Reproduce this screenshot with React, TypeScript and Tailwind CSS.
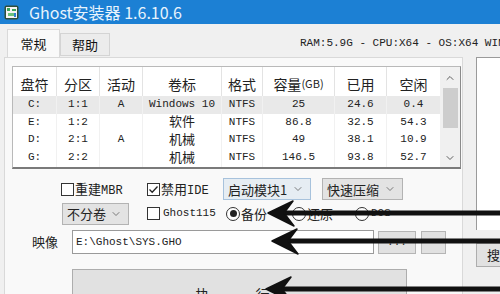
import { ChevronDown, ChevronUp } from 'lucide-react';

const CJK = { fontFamily: '"Noto Sans CJK SC", "Noto Sans", sans-serif' };
const MONO = { fontFamily: '"Liberation Mono", "Noto Sans CJK SC", monospace' };

const COLS = [
    { w: 'w-[44px]', label: '盘符' },
    { w: 'w-[43px]', label: '分区' },
    { w: 'w-[43px]', label: '活动' },
    { w: 'w-[79px]', label: '卷标' },
    { w: 'w-[41px]', label: '格式' },
    { w: 'w-[72px]', label: '容量' },
    { w: 'w-[52px]', label: '已用' },
    { w: 'w-[53px]', label: '空闲' },
];

const ROWS = [
    ['C:', '1:1', 'A', 'Windows 10', 'NTFS', '25', '24.6', '0.4'],
    ['E:', '1:2', '', '软件', 'NTFS', '86.8', '32.5', '54.3'],
    ['D:', '2:1', 'A', '机械', 'NTFS', '49', '38.1', '10.9'],
    ['G:', '2:2', '', '机械', 'NTFS', '146.5', '93.8', '52.7'],
    ['F:', '3:1', '', '文档', 'NTFS', '200', '120.4', '79.6'],
];

const isCjk = (s: string) => /[\u4e00-\u9fff]/.test(s);

function AppIcon() {
    return (
        <svg width="15" height="15" viewBox="0 0 15 15">
            <rect x="0.5" y="0.5" width="14" height="14" rx="2" fill="#2f4f3a" />
            <rect x="2" y="2" width="11" height="11" fill="#f4f4f4" />
            <rect x="3" y="3" width="3" height="3" fill="#3aa55a" />
            <rect x="8" y="4" width="4" height="2" fill="#3aa55a" />
            <rect x="4" y="8" width="6" height="3" fill="#6cc27c" />
            <rect x="10" y="8" width="2" height="4" fill="#2d7fd0" />
        </svg>
    );
}

function Checkbox({ checked }: { checked?: boolean }) {
    return (
        <span className="w-[13px] h-[13px] border border-[#333] bg-white flex items-center justify-center shrink-0">
            {checked && (
                <svg width="11" height="11" viewBox="0 0 11 11">
                    <path d="M1.5 5.5 L4.2 8.2 L9.5 2.5" stroke="#222" strokeWidth="1.3" fill="none" />
                </svg>
            )}
        </span>
    );
}

function Radio({ checked }: { checked?: boolean }) {
    return (
        <span className="w-[14px] h-[14px] rounded-full border border-[#333] bg-white flex items-center justify-center shrink-0">
            {checked && <span className="w-[7px] h-[7px] rounded-full bg-[#222]" />}
        </span>
    );
}

function Select({ label, className }: { label: string; className: string }) {
    return (
        <div className={`h-[22px] shrink-0 flex items-center justify-between pl-[4px] pr-[6px] border text-[13px] leading-none text-[#222] ${className}`} style={CJK}>
            <span>{label}</span>
            <ChevronDown size={12} strokeWidth={1.5} className="text-[#555]" />
        </div>
    );
}

function Arrow({ tip, y }: { tip: number; y: number }) {
    return (
        <g fill="#111" stroke="#111">
            <line x1={tip + 14} y1={y} x2={510} y2={y} strokeWidth="5" />
            <polygon points={`${tip},${y} ${tip + 25},${y - 12} ${tip + 16},${y} ${tip + 26},${y + 13}`} strokeWidth="1.5" strokeLinejoin="round" />
        </g>
    );
}

export default function App() {
    return (
        <div className="relative w-[500px] h-[294px] overflow-hidden bg-[#f0f0f0] flex flex-col" style={CJK}>
            {/* Title bar */}
            <div className="h-[24px] bg-[#1c80d4] flex items-center pl-[4px] shrink-0">
                <AppIcon />
                <span className="ml-[10px] text-[16px] text-[#e8f3fc] leading-none">Ghost安装器 1.6.10.6</span>
            </div>

            {/* Tab header row */}
            <div className="h-[33px] flex items-end shrink-0 relative">
                <div className="ml-[7px] w-[53px] h-[28px] bg-[#f9f9f9] border border-b-0 border-[#d9d9d9] flex items-center justify-center text-[13px] text-[#111]">
                    常规
                </div>
                <div className="w-[50px] h-[23px] mb-[1px] bg-[#ececec] border border-[#d4d4d4] flex items-center justify-center text-[13px] text-[#111]">
                    帮助
                </div>
                <span className="absolute left-[300px] top-[11px] text-[11px] text-[#222] whitespace-nowrap" style={MONO}>
                    RAM:5.9G - CPU:X64 - OS:X64 WIN10
                </span>
            </div>

            <div className="flex flex-1 min-h-0">
                {/* Tab panel */}
                <div className="ml-[4px] w-[459px] shrink-0 bg-[#f9f9f9] border-l border-t border-r border-[#d9d9d9] flex flex-col">
                    {/* Partition list */}
                    <div className="ml-[7px] mt-[8px] w-[449px] h-[103px] shrink-0 bg-white border-t border-l border-[#b9b9b9] border-r border-r-[#8a8a8a] border-b-2 border-b-[#7a7a7a] flex overflow-hidden">
                        <div className="flex flex-col">
                            <div className="flex h-[29px] shrink-0">
                                {COLS.map((c, i) => (
                                    <div key={c.label} className={`${c.w} h-full flex items-center justify-center pt-[4px] text-[14px] leading-none text-[#222] ${i < COLS.length - 1 ? 'border-r border-[#e3e3e3]' : ''}`}>
                                        {c.label}
                                        {i === 5 && <span className="text-[11px]">(GB)</span>}
                                    </div>
                                ))}
                            </div>
                            {ROWS.map((r, ri) => (
                                <div key={ri} className={`flex h-[17.6px] shrink-0 ${ri === 0 ? 'bg-[#e9e9e9]' : ''}`}>
                                    {r.map((v, ci) => (
                                        <div
                                            key={ci}
                                            className={`${COLS[ci].w} h-full flex items-center justify-center leading-none text-[#222] ${isCjk(v) ? 'text-[13px] pb-[3px]' : 'text-[11px]'} ${ci < COLS.length - 1 ? 'border-r border-[#f1f1f1]' : ''}`}
                                            style={isCjk(v) ? CJK : MONO}
                                        >
                                            {v}
                                        </div>
                                    ))}
                                </div>
                            ))}
                        </div>
                        {/* Scrollbar */}
                        <div className="w-[20px] h-[100px] bg-[#f0f0f0] flex flex-col items-center">
                            <ChevronUp size={12} strokeWidth={2} className="mt-[5px] text-[#606060]" />
                            <div className="mt-[4px] w-[15px] h-[40px] bg-[#cdcdcd]" />
                            <ChevronDown size={12} strokeWidth={2} className="mt-[24px] text-[#606060]" />
                        </div>
                    </div>

                    {/* Row 1 */}
                    <div className="mt-[9px] ml-[56px] flex items-center h-[22px] shrink-0 text-[13px] leading-none text-[#222]">
                        <div className="w-[86px] flex items-center gap-[1px]">
                            <Checkbox />
                            <span>重建<span className="text-[12px]" style={MONO}>MBR</span></span>
                        </div>
                        <div className="w-[76px] flex items-center gap-[1px]">
                            <Checkbox checked />
                            <span>禁用<span className="text-[12px]" style={MONO}>IDE</span></span>
                        </div>
                        <Select label="启动模块1" className="w-[88px] bg-[#e6edf3] border-[#a7c2dc]" />
                        <Select label="快速压缩" className="ml-[11px] w-[81px] bg-[#e3e3e3] border-[#b3b3b3]" />
                    </div>

                    {/* Row 2 */}
                    <div className="mt-[2px] ml-[57px] flex items-center h-[23px] shrink-0">
                        <Select label="不分卷" className="w-[67px] bg-[#e3e3e3] border-[#b3b3b3]" />
                        <div className="ml-[18px] w-[79px] flex items-center gap-[3px]">
                            <Checkbox />
                            <span className="text-[11px] text-[#222]" style={MONO}>Ghost115</span>
                        </div>
                        <div className="w-[66px] flex items-center gap-[1px]">
                            <Radio checked />
                            <span className="text-[13px] text-[#222]">备份</span>
                        </div>
                        <div className="w-[63px] flex items-center gap-[1px]">
                            <Radio />
                            <span className="text-[13px] text-[#222]">还原</span>
                        </div>
                        <div className="flex items-center gap-[2px]">
                            <Radio />
                            <span className="text-[11px] text-[#222]" style={MONO}>DOS</span>
                        </div>
                    </div>

                    {/* Row 3 */}
                    <div className="mt-[5px] flex items-center h-[24px] shrink-0">
                        <span className="ml-[27px] w-[40px] text-[13px] text-[#222]">映像</span>
                        <div className="w-[302px] h-[24px] bg-white border border-[#9a9a9a] flex items-center pl-[3px] text-[11px] text-[#222]" style={MONO}>
                            E:\Ghost\SYS.GHO
                        </div>
                        <div className="ml-[4px] w-[38px] h-[23px] bg-[#e1e1e1] border border-[#b5b5b5] flex items-center justify-center text-[11px] text-[#333]" style={MONO}>
                            ...
                        </div>
                        <div className="ml-[5px] w-[25px] h-[23px] bg-[#e1e1e1] border border-[#b5b5b5]" />
                    </div>

                    {/* Row 4 */}
                    <div className="mt-[15px] ml-[67px] w-[335px] h-[60px] shrink-0 bg-[#e1e1e1] border border-[#adadad] flex items-start justify-center gap-[46px] pt-[17px] pr-[14px] text-[14px] leading-none text-[#222]">
                        <span>执</span>
                        <span>行</span>
                    </div>
                </div>

                {/* Right side */}
                <div className="ml-[13px] flex-1 flex flex-col">
                    <div className="h-[173px] shrink-0 bg-white border-l border-t border-[#9a9a9a]" />
                    <div className="mt-[13px] h-[24px] shrink-0 bg-[#e1e1e1] border border-[#adadad] flex items-center pl-[10px] text-[13px] text-[#222] whitespace-nowrap overflow-hidden">
                        搜索
                    </div>
                </div>
            </div>

            {/* Annotation arrows */}
            <svg className="absolute inset-0 pointer-events-none" width="500" height="294" viewBox="0 0 500 294">
                <Arrow tip={268} y={213} />
                <Arrow tip={272} y={241} />
                <Arrow tip={266} y={289} />
            </svg>
        </div>
    );
}
